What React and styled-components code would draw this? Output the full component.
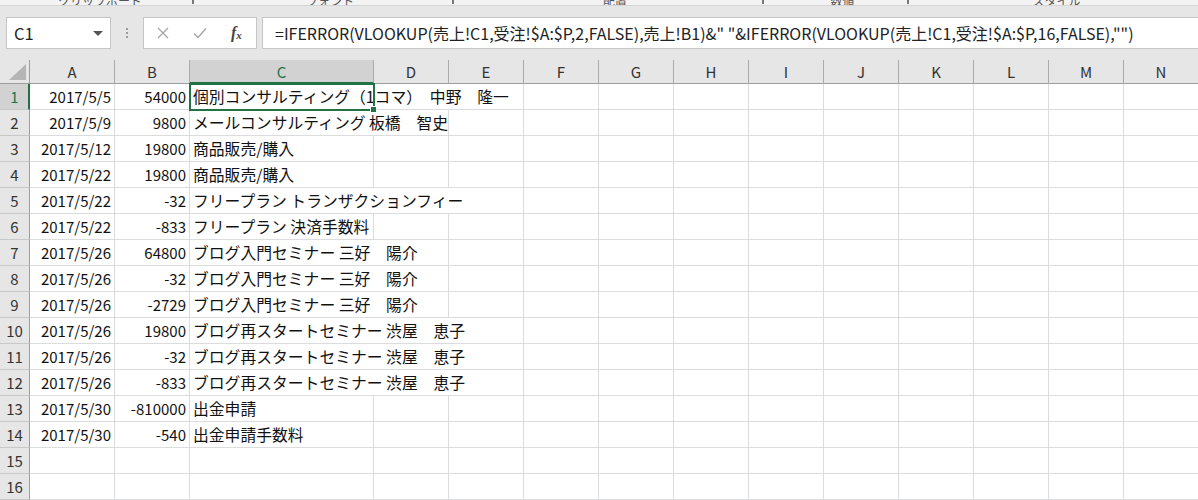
import React from "react";
import styled, { createGlobalStyle, css } from "styled-components";

const GREEN = "#217346";
const GRID = "#dadcdd";
const HEAD_BG = "#e6e6e6";
const HEAD_SEL = "#d2d2d2";

const GlobalStyle = createGlobalStyle`
  html, body {
    margin: 0;
    padding: 0;
    background: #ffffff;
  }
  body {
    font-family: "Noto Sans CJK JP", "Noto Sans", sans-serif;
  }
`;

const Page = styled.div`
  width: 1198px;
  height: 500px;
  overflow: hidden;
  display: flex;
  flex-direction: column;
  background: #ffffff;
`;

const RibbonStrip = styled.div`
  height: 5px;
  flex: none;
  display: flex;
  align-items: flex-end;
  background: #f3f3f3;
  border-bottom: 1px solid #d5d5d5;
  overflow: hidden;
`;

const RibbonGroup = styled.div`
  width: ${(p) => p.$w}px;
  flex: none;
  display: flex;
  align-items: flex-end;
  justify-content: center;
  position: relative;
  height: 5px;
`;

const GroupLabel = styled.span`
  font-size: 12px;
  line-height: 14px;
  color: #555;
  margin-bottom: -3px;
  white-space: nowrap;
`;

const Launcher = styled.span`
  position: absolute;
  right: 6px;
  bottom: 1px;
  width: 2px;
  height: 4px;
  background: #777;
`;

const FormulaRow = styled.div`
  height: 54px;
  flex: none;
  box-sizing: border-box;
  padding: 11px 0 0 6px;
  background: ${HEAD_BG};
  display: flex;
  align-items: flex-start;
`;

const NameBox = styled.div`
  width: 105px;
  height: 32px;
  box-sizing: border-box;
  background: #fff;
  border: 1px solid #c6c6c6;
  display: flex;
  align-items: center;
  justify-content: space-between;
  padding: 0 7px 0 7px;
  font-size: 16.5px;
  color: #222;
`;

const Caret = styled.span`
  width: 0;
  height: 0;
  border-left: 5px solid transparent;
  border-right: 5px solid transparent;
  border-top: 5px solid #555;
`;

const Grip = styled.div`
  width: 32px;
  height: 32px;
  display: flex;
  flex-direction: column;
  align-items: center;
  justify-content: center;
  gap: 2px;
  span {
    width: 2px;
    height: 2px;
    background: #9a9a9a;
  }
`;

const ActionBox = styled.div`
  width: 114px;
  height: 32px;
  box-sizing: border-box;
  background: #fff;
  border: 1px solid #c6c6c6;
  display: flex;
  align-items: center;
  padding-left: 13px;
  gap: 24px;
`;

const FxLabel = styled.span`
  font-family: "Liberation Serif", serif;
  font-style: italic;
  font-weight: bold;
  font-size: 16px;
  color: #444;
  sub {
    font-size: 11px;
    vertical-align: -1px;
  }
`;

const FormulaBox = styled.div`
  flex: 1;
  height: 32px;
  margin-left: 5px;
  margin-right: -2px;
  box-sizing: border-box;
  background: #fff;
  border: 1px solid #c6c6c6;
  display: flex;
  align-items: center;
  padding-left: 12px;
  font-size: 16px;
  color: #222;
  white-space: nowrap;
  overflow: hidden;
`;

const Sheet = styled.div`
  position: relative;
  display: grid;
  grid-template-columns: 30px 85px 75px 184px repeat(11, 75px);
  grid-auto-rows: 26px;
  grid-template-rows: 24px;
`;

const Corner = styled.div`
  background: ${HEAD_BG};
  border-right: 1px solid #9e9e9e;
  border-bottom: 1px solid #9e9e9e;
  box-sizing: border-box;
  display: flex;
  align-items: flex-end;
  justify-content: flex-end;
  padding: 0 3px 3px 0;
`;

const ColHead = styled.div`
  box-sizing: border-box;
  background: ${(p) => (p.$sel ? HEAD_SEL : HEAD_BG)};
  border-right: 1px solid #ababab;
  border-bottom: ${(p) => (p.$sel ? `2px solid ${GREEN}` : "1px solid #9e9e9e")};
  color: ${(p) => (p.$sel ? GREEN : "#333")};
  font-size: 15px;
  display: flex;
  align-items: center;
  justify-content: center;
  padding-top: ${(p) => (p.$sel ? "1px" : "0")};
`;

const RowHead = styled.div`
  box-sizing: border-box;
  background: ${(p) => (p.$sel ? HEAD_SEL : HEAD_BG)};
  border-right: ${(p) => (p.$sel ? `2px solid ${GREEN}` : "1px solid #9e9e9e")};
  border-bottom: 1px solid #c8c8c8;
  color: ${(p) => (p.$sel ? GREEN : "#333")};
  font-size: 15px;
  display: flex;
  align-items: center;
  justify-content: center;
  padding-left: ${(p) => (p.$sel ? "1px" : "0")};
`;

const Cell = styled.div`
  box-sizing: border-box;
  grid-column: span ${(p) => p.$span || 1};
  border-right: 1px solid ${GRID};
  border-bottom: 1px solid ${GRID};
  font-size: 15px;
  line-height: 20px;
  color: #111;
  white-space: nowrap;
  display: flex;
  align-items: flex-end;
  padding: 0 3px 2px 3px;
  ${(p) =>
    p.$num &&
    css`
      justify-content: flex-end;
    `}
  ${(p) =>
    p.$wide &&
    css`
      font-size: 15.8px;
    `}
`;

const Selection = styled.div`
  position: absolute;
  left: 189px;
  top: 23px;
  width: 186px;
  height: 28px;
  box-sizing: border-box;
  border: 2px solid ${GREEN};
  pointer-events: none;
`;

const FillHandle = styled.span`
  position: absolute;
  right: -4px;
  bottom: -4px;
  width: 5px;
  height: 5px;
  background: ${GREEN};
  border: 1px solid #fff;
`;

const ribbonGroups = [
  { w: 200, label: "クリップボード", launcher: true },
  { w: 260, label: "フォント", launcher: true },
  { w: 310, label: "配置", launcher: true },
  { w: 145, label: "数値", launcher: true },
  { w: 283, label: "スタイル" },
];

const columns = ["A", "B", "C", "D", "E", "F", "G", "H", "I", "J", "K", "L", "M", "N"];

const rows = [
  ["2017/5/5", "54000", "個別コンサルティング（1コマ）\u3000中野\u3000隆一", 3],
  ["2017/5/9", "9800", "メールコンサルティング 板橋\u3000智史", 2],
  ["2017/5/12", "19800", "商品販売/購入", 1],
  ["2017/5/22", "19800", "商品販売/購入", 1],
  ["2017/5/22", "-32", "フリープラン トランザクションフィー", 3],
  ["2017/5/22", "-833", "フリープラン 決済手数料", 1],
  ["2017/5/26", "64800", "ブログ入門セミナー 三好\u3000陽介", 2],
  ["2017/5/26", "-32", "ブログ入門セミナー 三好\u3000陽介", 2],
  ["2017/5/26", "-2729", "ブログ入門セミナー 三好\u3000陽介", 2],
  ["2017/5/26", "19800", "ブログ再スタートセミナー 渋屋\u3000恵子", 3],
  ["2017/5/26", "-32", "ブログ再スタートセミナー 渋屋\u3000恵子", 3],
  ["2017/5/26", "-833", "ブログ再スタートセミナー 渋屋\u3000恵子", 3],
  ["2017/5/30", "-810000", "出金申請", 1],
  ["2017/5/30", "-540", "出金申請手数料", 1],
  ["", "", "", 1],
  ["", "", "", 1],
];

const FORMULA =
  '=IFERROR(VLOOKUP(売上!C1,受注!$A:$P,2,FALSE),売上!B1)&" "&IFERROR(VLOOKUP(売上!C1,受注!$A:$P,16,FALSE),"")';

function CrossIcon() {
  return (
    <svg width="12" height="12" viewBox="0 0 12 12">
      <path d="M1 1 L11 11 M11 1 L1 11" stroke="#a6a6a6" strokeWidth="1.3" fill="none" />
    </svg>
  );
}

function CheckIcon() {
  return (
    <svg width="14" height="12" viewBox="0 0 14 12">
      <path d="M1 6.5 L5 10.5 L13 1.5" stroke="#a6a6a6" strokeWidth="1.4" fill="none" />
    </svg>
  );
}

function CornerTriangle() {
  return (
    <svg width="17" height="16" viewBox="0 0 17 16">
      <polygon points="17,0 17,16 0,16" fill="#b5b5b5" />
    </svg>
  );
}

export default function App() {
  return (
    <Page>
      <GlobalStyle />
      <RibbonStrip>
        {ribbonGroups.map((g) => (
          <RibbonGroup key={g.label} $w={g.w}>
            <GroupLabel>{g.label}</GroupLabel>
            {g.launcher && <Launcher />}
          </RibbonGroup>
        ))}
      </RibbonStrip>

      <FormulaRow>
        <NameBox>
          <span>C1</span>
          <Caret />
        </NameBox>
        <Grip>
          <span />
          <span />
          <span />
        </Grip>
        <ActionBox>
          <CrossIcon />
          <CheckIcon />
          <FxLabel>
            f<sub>x</sub>
          </FxLabel>
        </ActionBox>
        <FormulaBox>{FORMULA}</FormulaBox>
      </FormulaRow>

      <Sheet>
        <Corner>
          <CornerTriangle />
        </Corner>
        {columns.map((c) => (
          <ColHead key={c} $sel={c === "C"}>
            {c}
          </ColHead>
        ))}
        {rows.map(([date, amount, text, span], i) => (
          <React.Fragment key={i}>
            <RowHead $sel={i === 0}>{i + 1}</RowHead>
            <Cell $num>{date}</Cell>
            <Cell $num>{amount}</Cell>
            <Cell $span={span} $wide>
              {text}
            </Cell>
            {Array.from({ length: 14 - span - 2 }).map((_, j) => (
              <Cell key={j} />
            ))}
          </React.Fragment>
        ))}
        <Selection>
          <FillHandle />
        </Selection>
      </Sheet>
    </Page>
  );
}
